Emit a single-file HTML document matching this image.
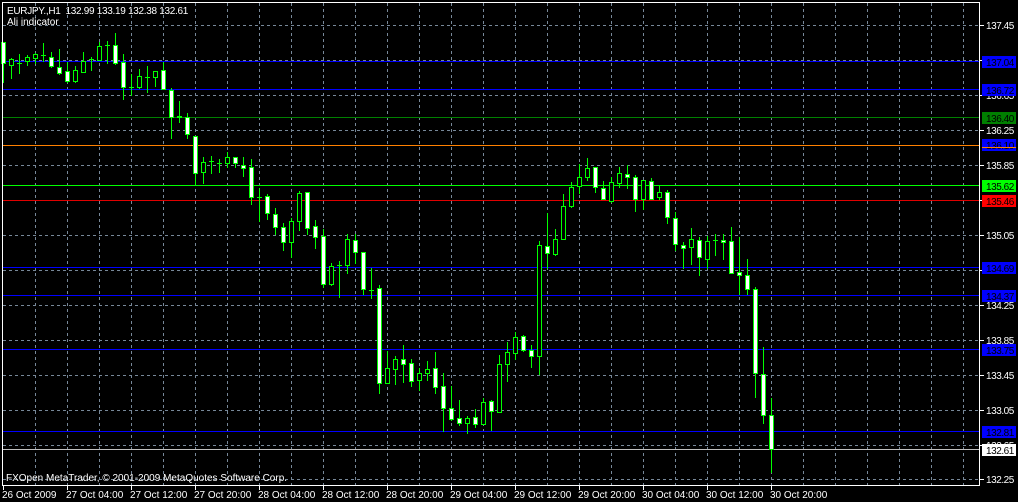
<!DOCTYPE html>
<html><head><meta charset="utf-8">
<style>
html,body{margin:0;padding:0;background:#000;width:1018px;height:502px;overflow:hidden}
svg text{font-family:"Liberation Sans",sans-serif;font-size:10px}
.n{letter-spacing:-0.45px}
</style></head>
<body>
<svg id="s" width="1018" height="502" xmlns="http://www.w3.org/2000/svg" shape-rendering="crispEdges">
<rect width="1018" height="502" fill="#000"/>
<g id="grid"></g>
<g id="lines"></g>
<g id="candles"></g>
<g id="axis"></g>
<rect x="2.5" y="2.5" width="977" height="483" fill="none" stroke="#fff" stroke-width="1"/>
<text x="7" y="14" fill="#fff" style="letter-spacing:-0.3px">EURJPY.,H1&#160; 132.99 133.19 132.38 132.61</text>
<text x="7" y="25" fill="#fff">Ali indicator</text>
<text x="6" y="481" fill="#fff">FXOpen MetaTrader, © 2001-2009 MetaQuotes Software Corp.</text>
</svg>
<script>
var NS="http://www.w3.org/2000/svg";
function el(p,t,a,txt){var e=document.createElementNS(NS,t);for(var k in a)e.setAttribute(k,a[k]);if(txt)e.textContent=txt;document.getElementById(p).appendChild(e);return e;}
var gy=[25,60,95,130,165,200,235,270,305,340,375,410,445,479];
gy.forEach(function(y){el('grid','line',{x1:3,x2:980,y1:y+.5,y2:y+.5,stroke:'#778899','stroke-dasharray':'3,3'});});
for(var x=35;x<980;x+=32){el('grid','line',{x1:x+.5,x2:x+.5,y1:3,y2:485,stroke:'#778899','stroke-dasharray':'3,3'});}
var gl=["137.45","137.05","136.65","136.25","135.85","135.45","135.05","134.65","134.25","133.85","133.45","133.05","132.65","132.25"];
gy.forEach(function(y,i){el('axis','line',{x1:980,x2:984,y1:y+.5,y2:y+.5,stroke:'#fff'});el('axis','text',{x:986,y:y+4,fill:'#fff','class':'n'},gl[i]);});
var bl=["26 Oct 2009","27 Oct 04:00","27 Oct 12:00","27 Oct 20:00","28 Oct 04:00","28 Oct 12:00","28 Oct 20:00","29 Oct 04:00","29 Oct 12:00","29 Oct 20:00","30 Oct 04:00","30 Oct 12:00","30 Oct 20:00"];
bl.forEach(function(t,i){var x=3+64*i;el('axis','line',{x1:x+.5,x2:x+.5,y1:485,y2:490,stroke:'#fff'});el('axis','text',{x:x-1,y:498,fill:'#fff'},t);});
var hl=[[61,'#0000ff','137.04','#0000ff','#000'],[89,'#0000ff','136.72','#0000ff','#000'],[117,'#008000','136.40','#008000','#000'],[144,null,'136.10','#0000ff','#000'],[185,'#00ff00','135.62','#00ff00','#000'],[200,'#e00000','135.46','#ff0000','#000'],[267,'#0000ff','134.69','#0000ff','#000'],[295,'#0000ff','134.37','#0000ff','#000'],[349,'#0000ff','133.75','#0000ff','#000'],[431,'#0000ff','132.81','#0000ff','#000'],[449,'#c0c0c0','132.61','#ffffff','#000']];
hl.forEach(function(h){
 if(h[1])el('lines','rect',{x:3,width:977,y:h[0],height:1,fill:h[1]});
 el('axis','rect',{x:982,y:h[0]-5,width:34,height:12,fill:h[3]});el('axis','text',{x:986,y:h[0]+5,fill:h[4],'class':'n'},h[2]);
});
el('lines','rect',{x:3,width:977,y:145,height:1,fill:'#ff8000'});
el('axis','rect',{x:982,width:34,y:147,height:1,fill:'#ff8000'});
var c=[[42,42,63,82,1],[58,59,65,78,0],[54,63,64,73,2],[55,57,61,65,0],[53,54,58,63,0],[43,55,55,61,2],[52,57,66,67,1],[49,67,73,74,1],[62,71,81,82,1],[66,70,81,82,0],[52,61,72,72,0],[57,59,59,70,2],[42,46,60,60,0],[41,45,45,63,2],[33,45,63,64,1],[54,62,87,99,1],[74,87,87,95,2],[69,76,87,88,0],[66,77,77,92,2],[71,71,77,86,0],[62,70,89,89,1],[88,90,117,138,1],[101,116,117,122,1],[113,117,134,138,1],[136,136,173,185,1],[157,162,172,183,0],[156,161,161,173,2],[159,163,163,172,2],[152,157,163,167,0],[157,157,163,167,1],[157,165,168,176,1],[159,167,197,204,1],[188,197,197,221,2],[194,196,213,219,1],[208,214,227,234,1],[223,227,242,250,1],[218,221,242,257,0],[191,193,221,230,0],[192,192,228,234,1],[220,226,237,248,1],[229,236,284,287,1],[263,266,284,285,0],[261,265,265,297,2],[234,239,265,273,0],[234,240,252,263,1],[252,252,289,294,1],[268,290,290,298,2],[285,288,383,393,1],[351,368,383,383,0],[356,359,369,384,0],
[345,359,364,382,1],[359,363,381,386,1],[368,373,380,390,0],[361,369,373,380,0],[352,368,387,393,1],[373,386,408,431,1],[386,408,419,420,1],[400,418,423,425,1],[416,418,423,433,0],[409,417,424,427,1],[398,402,424,424,0],[400,401,411,430,1],[355,364,412,412,0],[342,352,364,381,0],[332,337,353,359,0],[335,336,350,351,1],[345,350,356,367,1],[241,245,356,374,0],[213,246,253,268,1],[229,239,254,255,0],[194,206,239,239,0],[182,187,206,207,0],[164,177,186,193,0],[158,168,177,180,0],[167,167,187,192,1],[181,188,199,199,1],[177,182,201,202,0],[167,173,183,187,0],[165,174,177,188,1],[175,177,199,211,1],[180,180,199,209,0],[178,181,199,199,1],[186,192,197,199,0],[190,192,217,223,1],[212,218,244,250,1],[242,245,248,268,1],[228,239,247,264,0],[237,240,257,275,1],[236,241,259,268,0],[234,240,240,255,2],[234,240,242,259,1],[227,241,273,273,1],[237,272,275,294,1],[259,275,289,294,1],[287,289,373,397,1],[347,374,415,423,1],[398,415,449,472,1]];
c.forEach(function(d,i){
 var x=3+8*i;
 el('candles','line',{x1:x+.5,x2:x+.5,y1:d[0],y2:d[3]+1,stroke:'#00ff00'});
 if(d[4]==2||d[2]-d[1]<1){el('candles','line',{x1:x-2,x2:x+3,y1:d[1]+.5,y2:d[1]+.5,stroke:'#00ff00'});}
 else el('candles','rect',{x:x-1.5,y:d[1]+.5,width:4,height:d[2]-d[1],fill:d[4]==1?'#fff':'#000',stroke:'#00ff00'});
});
</script>
</body></html>
